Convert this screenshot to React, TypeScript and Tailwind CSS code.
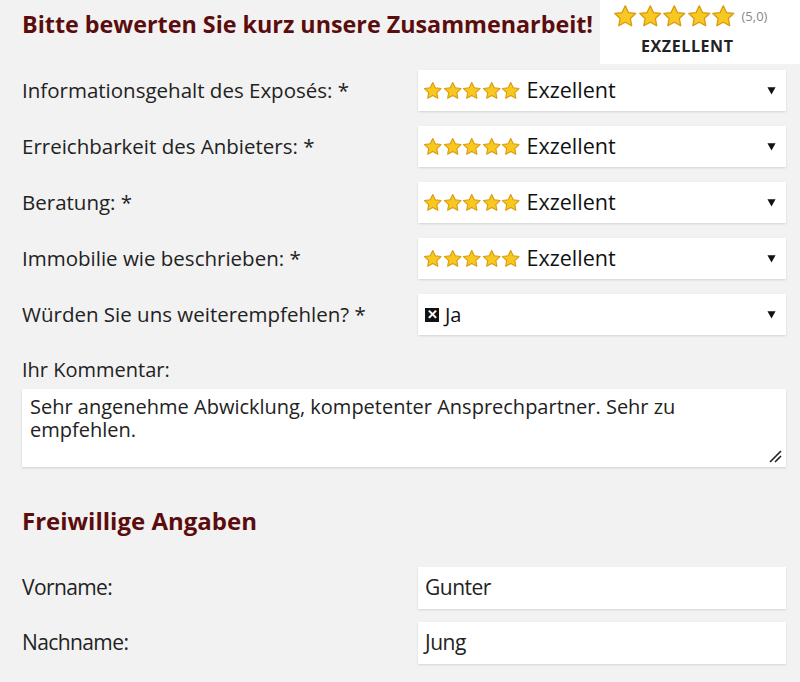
const Star = ({ size }: { size: number }) => (
  <svg width={size} height={size} viewBox="0 0 24 24">
    <path
      d="M12 1.8l3.1 6.6 7.1.9-5.2 4.9 1.3 7.1L12 17.9l-6.3 3.4 1.3-7.1-5.2-4.9 7.1-.9z"
      fill="#f7c821"
      stroke="#d99a0b"
      strokeWidth="1.3"
      strokeLinejoin="round"
    />
  </svg>
);

const Stars = ({ size }: { size: number }) => (
  <span className="flex">
    {[0, 1, 2, 3, 4].map((i) => (
      <Star key={i} size={size} />
    ))}
  </span>
);

const Caret = () => (
  <svg width="9" height="9" viewBox="0 0 10 10" className="ml-auto">
    <path d="M0.5 1.5h9L5 9.5z" fill="#111" />
  </svg>
);

function SelectBox({ children }: { children: React.ReactNode }) {
  return (
    <div className="flex h-[41px] w-[368px] items-center bg-white pl-[5px] pr-[10px] shadow-[0_1px_2px_rgba(0,0,0,0.12)]">
      {children}
      <Caret />
    </div>
  );
}

function RatingRow({ label }: { label: string }) {
  return (
    <div className="flex items-center justify-between">
      <span className="text-[20.5px] text-[#222]">{label}</span>
      <SelectBox>
        <Stars size={19.5} />
        <span className="ml-[6px] text-[21.5px] text-[#111]">Exzellent</span>
      </SelectBox>
    </div>
  );
}

export default function App() {
  const ratings = [
    "Informationsgehalt des Exposés: *",
    "Erreichbarkeit des Anbieters: *",
    "Beratung: *",
    "Immobilie wie beschrieben: *",
  ];

  return (
    <div className="h-[682px] w-[800px] overflow-hidden bg-[#f2f2f2] font-['Open_Sans',sans-serif]">
      {/* Kopf mit Badge */}
      <div className="flex items-start justify-between">
        <h1 className="shrink-0 whitespace-nowrap pl-[22px] pt-[7px] text-[23.3px] font-bold text-[#5b0d0d]">
          Bitte bewerten Sie kurz unsere Zusammenarbeit!
        </h1>
        <div className="flex h-[64px] w-[200px] shrink-0 flex-col bg-white pl-[13px] pt-[4px]">
          <div className="flex items-center">
            <Stars size={24.5} />
            <span className="ml-[6px] text-[13px] text-[#888]">(5,0)</span>
          </div>
          <span className="ml-[28px] mt-[5px] text-[16px] font-bold tracking-[0.6px] text-[#222]">EXZELLENT</span>
        </div>
      </div>

      <div className="flex flex-col gap-[15px] pl-[22px] pr-[14px] pt-[6px]">
        {ratings.map((r) => (
          <RatingRow key={r} label={r} />
        ))}
        <div className="flex items-center justify-between">
          <span className="text-[20.5px] text-[#222]">Würden Sie uns weiterempfehlen? *</span>
          <SelectBox>
            <span className="ml-[2px] flex h-[14px] w-[14px] items-center justify-center bg-[#111] text-[13px] leading-none font-bold text-white">
              ✕
            </span>
            <span className="ml-[6px] text-[20px] text-[#111]">Ja</span>
          </SelectBox>
        </div>
      </div>

      <div className="pl-[22px] pr-[14px] pt-[20px]">
        <div className="text-[20px] text-[#222]">Ihr Kommentar:</div>
        <div className="relative mt-[4px] h-[78px] bg-white px-[8px] pt-[6px] text-[20px] leading-[23px] text-[#222] shadow-[0_1px_2px_rgba(0,0,0,0.15)]">
          Sehr angenehme Abwicklung, kompetenter Ansprechpartner. Sehr zu empfehlen.
          <svg width="14" height="14" viewBox="0 0 14 14" className="absolute bottom-[4px] right-[4px]">
            <path d="M2 13L13 2M7 13L13 7" stroke="#222" strokeWidth="1.6" />
          </svg>
        </div>
      </div>

      <h2 className="pl-[22px] pt-[36px] text-[24px] font-bold text-[#5b0d0d]">
        Freiwillige Angaben
      </h2>

      <div className="flex flex-col gap-[13px] pl-[22px] pr-[14px] pt-[28px]">
        {[
          ["Vorname:", "Gunter"],
          ["Nachname:", "Jung"],
        ].map(([l, v]) => (
          <div key={l} className="flex items-center justify-between">
            <span className="text-[21px] tracking-[-0.6px] text-[#222]">{l}</span>
            <div className="flex h-[42px] w-[368px] items-center bg-white px-[7px] text-[21px] tracking-[-0.5px] text-[#222] shadow-[0_1px_2px_rgba(0,0,0,0.12)]">
              {v}
            </div>
          </div>
        ))}
      </div>
    </div>
  );
}
